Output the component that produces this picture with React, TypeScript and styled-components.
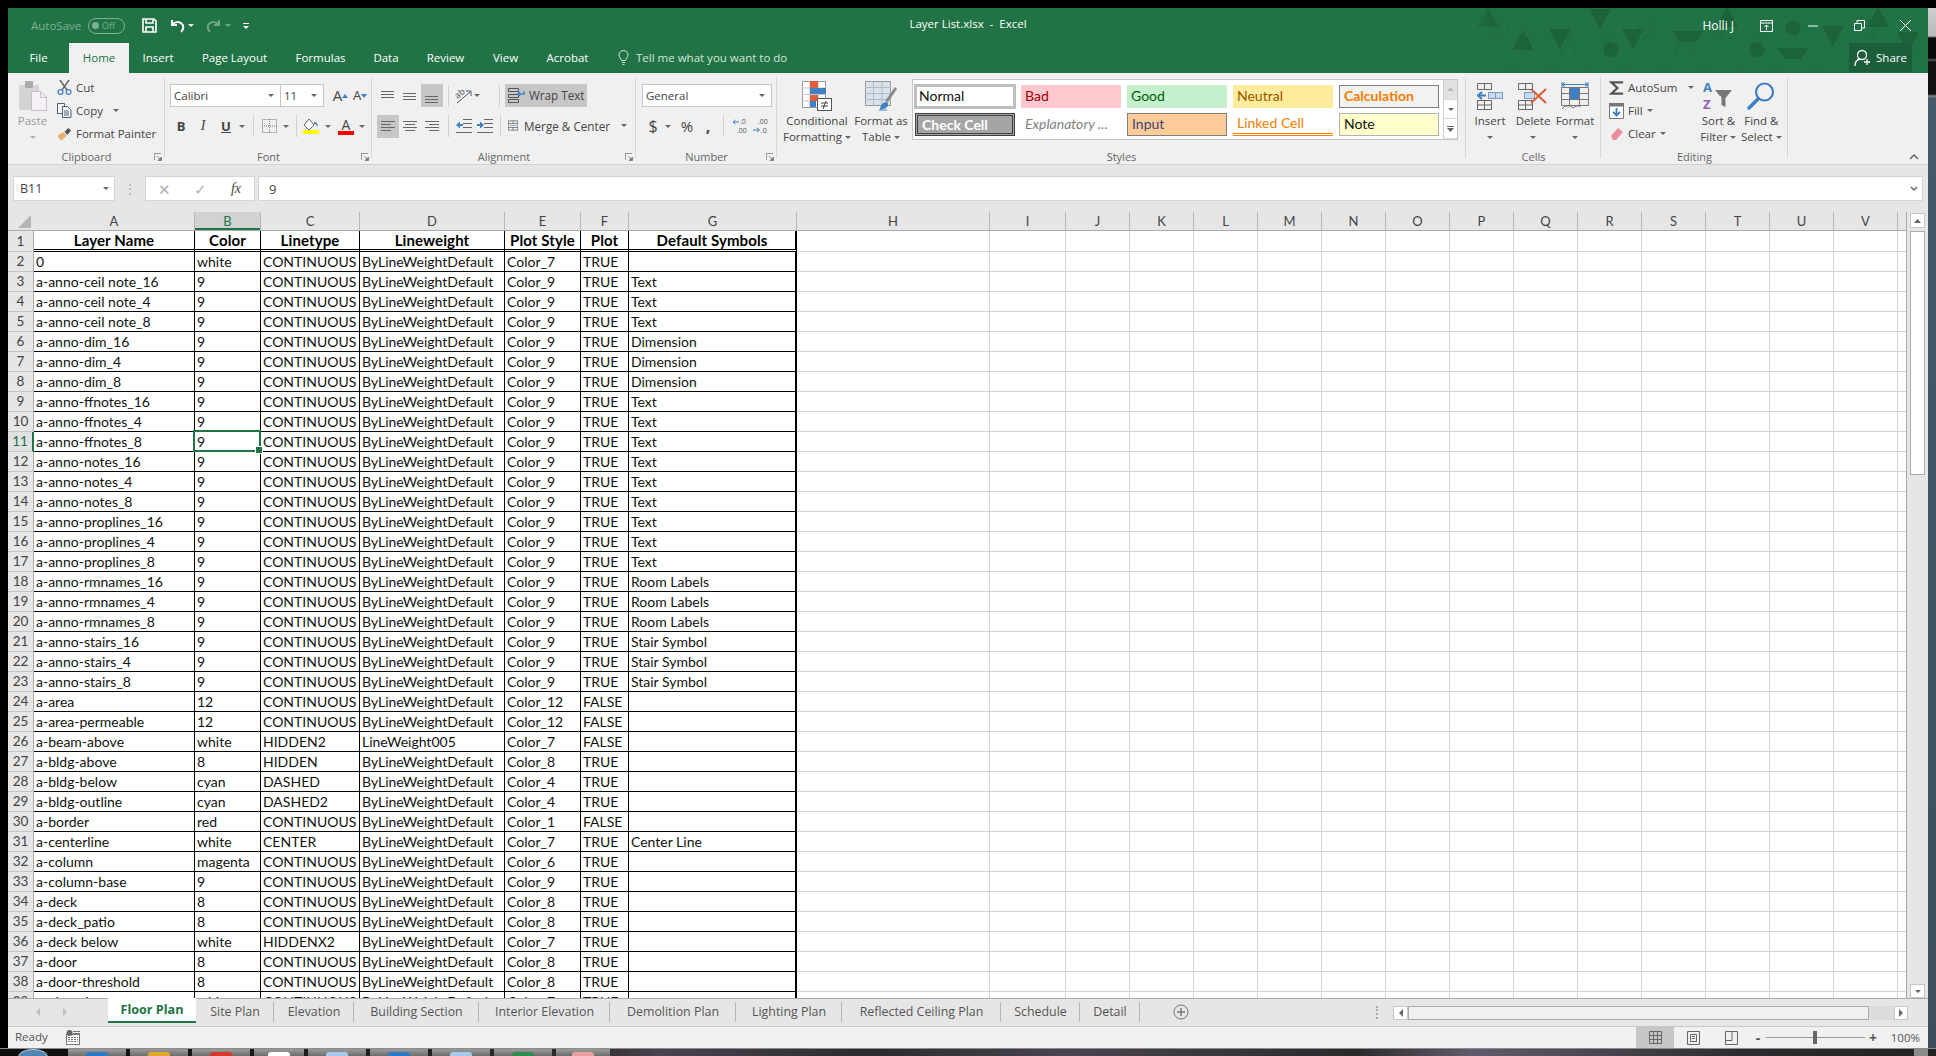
import React from "react";
import styled, { createGlobalStyle, css } from "styled-components";

const ui = `"Open Sans", "Noto Sans", "Liberation Sans", sans-serif`;
const cellFont = `Lato, "Noto Sans", "Liberation Sans", sans-serif`;
const green = "#217346";

const Global = createGlobalStyle`
  html, body { margin: 0; padding: 0; background: #000; overflow: hidden; }
  #root { width: 1936px; height: 1056px; }
  * { box-sizing: border-box; }
`;

const Page = styled.div`
  width: 1936px; height: 1056px; background: #000; padding-top: 8px;
  display: flex; flex-direction: column; font-family: ${ui};
`;
const Middle = styled.div`display: flex; padding-left: 8px; height: 1040px;`;
const Win = styled.div`width: 1920px; height: 1040px; display: flex; flex-direction: column; background: #e6e6e6;`;
const Strip = styled.div`
  width: 8px;
  background: linear-gradient(#cfcfcf 0, #b9b9b9 28px, #0a0a0a 30px, #0a0a0a 50px, #555 52px, #111 54px, #111 86px, #8a8a8a 88px, #45596a 90px, #3c4f5b 100%);
`;

/* title */
const Head = styled.div`background: ${green}; height: 65px; position: relative; color: #fff; flex: none;`;
const Pattern = styled.svg`
  position: absolute; right: 0; top: 0; pointer-events: none;
  mask-image: linear-gradient(90deg, transparent, #000 70px);
`;
const TitleRow = styled.div`height: 35px; display: grid; grid-template-columns: 1fr auto 1fr; align-items: center; position: relative;`;
const Qat = styled.div`display: flex; align-items: center; padding-left: 23px;`;
const AutoSave = styled.span`font-size: 11.5px; color: #7fb195; width: 57px;`;
const Toggle = styled.span`
  width: 37px; height: 16px; border: 1px solid #7fb195; border-radius: 8px; color: #7fb195;
  font-size: 9px; display: flex; align-items: center; gap: 3px; padding-left: 3px; margin-right: 17px;
  &::before { content: ""; width: 7px; height: 7px; border-radius: 50%; background: #7fb195; }
`;
const QatSlot = styled.span<{ $w: number; $ml?: number }>`
  width: ${p => p.$w}px; margin-left: ${p => p.$ml ?? 0}px; display: flex; flex-direction: column; gap: 2px; align-items: center; justify-content: center; flex: none;
`;
const QatBar = styled.i`display: block; width: 6px; height: 1px; background: #fff;`;
const DocTitle = styled.div`font-size: 11.5px; white-space: pre; margin-top: -4px;`;
const Controls = styled.div`display: flex; align-items: center; justify-content: flex-end; padding-right: 17px;`;
const UserName = styled.span`font-size: 12px; margin-right: 26px;`;
const Ctrl = styled.span<{ $w: number; $ml?: number }>`width: ${p => p.$w}px; margin-left: ${p => p.$ml ?? 0}px; display: flex; justify-content: center; flex: none;`;

const TabRow = styled.div`height: 30px; display: flex; align-items: stretch; position: relative;`;
const Tab = styled.div<{ $w: number; $active?: boolean }>`
  width: ${p => p.$w}px; flex: none; display: flex; align-items: center; justify-content: center; padding-bottom: 2px;
  font-size: 11.5px; color: #fff;
  ${p => p.$active && css`background: #f0f0f0; color: ${green};`}
`;
const TellMe = styled.div`display: flex; align-items: center; gap: 7px; padding: 0 0 2px 16px; font-size: 11.5px; color: #d3e5da;`;
const Share = styled.div`
  margin-left: auto; margin-right: 16px; width: 63px; height: 29px; background: #1b5e39; display: flex;
  align-items: center; justify-content: center; gap: 5px; font-size: 11.5px; color: #fff;
`;

/* ribbon */
const Ribbon = styled.div`height: 92px; background: #f0f0f0; display: flex; border-bottom: 1px solid #d2d2d2; flex: none; position: relative;`;
const Group = styled.div<{ $w: number }>`
  width: ${p => p.$w}px; flex: none; display: flex; flex-direction: column; position: relative;
  &::after { content: ""; position: absolute; right: 0; top: 4px; bottom: 6px; width: 1px; background: #d6d6d6; }
`;
const Body = styled.div<{ $pl?: number }>`height: 76px; flex: none; display: flex; padding-left: ${p => p.$pl ?? 0}px;`;
const Label = styled.div`height: 15px; text-align: center; font-size: 11px; line-height: 15px; color: #666; position: relative;`;
const Launcher = styled.svg`position: absolute; right: 3px; top: 4px;`;
const Big = styled.div<{ $w: number; $muted?: boolean }>`
  width: ${p => p.$w}px; flex: none; display: flex; flex-direction: column; align-items: center; padding-top: 8px;
  font-size: 11.5px; line-height: 16px; color: ${p => (p.$muted ? "#9b9b9b" : "#444")}; white-space: nowrap;
`;
const BigIcon = styled.div`height: 30px; margin-bottom: 2px; display: flex; align-items: center; justify-content: center;`;
const Line = styled.div`height: 16px; display: flex; align-items: center; gap: 3px; justify-content: center;`;
const Caret = styled.i<{ $c?: string }>`
  display: block; width: 0; height: 0; flex: none;
  border-left: 3px solid transparent; border-right: 3px solid transparent; border-top: 3px solid ${p => p.$c ?? "#666"};
`;
const SmallList = styled.div`display: flex; flex-direction: column; padding-top: 3px;`;
const SmallItem = styled.div<{ $muted?: boolean }>`height: 23px; display: flex; align-items: center; gap: 4px; font-size: 11.5px; color: #444; white-space: nowrap;`;
const SmallIcon = styled.span`width: 15px; display: flex; justify-content: center; flex: none;`;
const Rows = styled.div`display: flex; flex-direction: column; padding-top: 11px; gap: 8px;`;
const RowLine = styled.div<{ $h?: number }>`height: ${p => p.$h ?? 23}px; display: flex; align-items: center;`;
const Combo = styled.div<{ $w: number }>`
  width: ${p => p.$w}px; height: 23px; background: #fff; border: 1px solid #c6c6c6; flex: none;
  display: flex; align-items: center; justify-content: space-between; padding: 0 6px 0 3px;
  font-size: 11.5px; color: #444; & + & { border-left: 0; }
`;
const Slot = styled.span<{ $w: number; $ml?: number; $on?: boolean }>`
  width: ${p => p.$w}px; height: 22px; margin-left: ${p => p.$ml ?? 0}px; flex: none; display: flex; align-items: center; justify-content: center;
  color: #444; ${p => p.$on && "background: #c6c6c6; height: 23px;"}
`;
const Sep = styled.span<{ $w: number; $ml?: number }>`
  width: ${p => p.$w}px; height: 22px; margin-left: ${p => p.$ml ?? 0}px; flex: none;
  background: linear-gradient(#d0d0d0, #d0d0d0) center / 1px 100% no-repeat;
`;
const Glyph = styled.span<{ $size?: number; $b?: boolean; $i?: boolean; $u?: boolean; $serif?: boolean }>`
  font-size: ${p => p.$size ?? 13}px; line-height: 1; color: #444; font-weight: ${p => (p.$b ? 700 : 400)};
  font-style: ${p => (p.$i ? "italic" : "normal")}; text-decoration: ${p => (p.$u ? "underline" : "none")};
  font-family: ${p => (p.$serif ? `"Liberation Serif", serif` : ui)};
`;
const TextBtn = styled.div<{ $w: number; $on?: boolean; $gap?: number }>`
  width: ${p => p.$w}px; height: 23px; flex: none; display: flex; align-items: center; gap: ${p => p.$gap ?? 4}px; padding: 0 0 1px 3px;
  font-size: 11.7px; color: #444; white-space: nowrap; ${p => p.$on && "background: #c6c6c6;"}
`;
const ColorGlyph = styled.span<{ $bar: string }>`
  display: flex; flex-direction: column; align-items: center; width: 16px;
  &::after { content: ""; width: 16px; height: 4px; background: ${p => p.$bar}; margin-top: -1px; }
`;

const Gallery = styled.div`
  width: 546px; height: 61px; margin: 6px 0 0 3px; border: 1px solid #c6c6c6; background: #fff; display: flex; flex: none;
`;
const StyleGrid = styled.div`
  flex: 1; display: grid; grid-template-columns: repeat(5, 100px); grid-auto-rows: 23px; column-gap: 6px; row-gap: 5px; padding: 5px 0 0 2px;
`;
const StyleCell = styled.div<{ $kind: string }>`
  font-family: ${cellFont}; font-size: 14px; display: flex; align-items: center; padding: 0 0 3px 4px; white-space: nowrap; overflow: hidden;
  ${p => ({
    normal: "color:#111;box-shadow:0 0 0 1px #bfbfbf, inset 0 0 0 2px #bfbfbf;",
    bad: "background:#ffc7ce;color:#9c0006;",
    good: "background:#c6efce;color:#006100;",
    neutral: "background:#ffeb9c;color:#9c5700;",
    calc: "background:#f2f2f2;color:#fa7d00;font-weight:700;border:1px solid #7f7f7f;",
    check: "background:#a5a5a5;color:#fff;font-weight:700;border:3px double #3f3f3f;padding-bottom:1px;",
    expl: "color:#7f7f7f;font-style:italic;",
    input: "background:#ffcc99;color:#3f3f76;border:1px solid #7f7f7f;",
    linked: "color:#fa7d00;border-bottom:3px double #ff8001;padding-bottom:1px;",
    note: "background:#ffffcc;color:#111;border:1px solid #b2b2b2;",
  } as Record<string, string>)[p.$kind]}
`;
const GalleryScroll = styled.div`width: 14px; flex: none; display: flex; flex-direction: column; border-left: 1px solid #d0d0d0;`;
const GalleryBtn = styled.div<{ $top?: boolean }>`
  flex: 1; display: flex; align-items: center; justify-content: center; border-bottom: 1px solid #d8d8d8;
  background: ${p => (p.$top ? "#e2e2e2" : "#fff")};
`;
const Collapse = styled.svg`position: absolute; right: 9px; bottom: 4px;`;

/* formula */
const Formula = styled.div`height: 25px; margin-top: 11px; display: flex; padding: 0 5px; flex: none; font-size: 12px; color: #444;`;
const Box = styled.div<{ $w?: number }>`
  ${p => (p.$w ? `width:${p.$w}px;flex:none;` : "flex:1;")}
  background: #fff; border: 1px solid #d4d4d4; display: flex; align-items: center;
`;
const NameInner = styled.span`flex: 1; padding-left: 6px; font-size: 12.5px;`;
const Grip = styled.span`width: 30px; flex: none; display: flex; justify-content: center; align-items: center; color: #aaa; font-size: 12px;`;
const FnSlot = styled.span<{ $w: number }>`width: ${p => p.$w}px; display: flex; justify-content: center; flex: none; color: #b0b0b0; font-size: 15px;`;
const FormulaText = styled.span`flex: 1; padding-left: 10px; font-size: 13px;`;
const FormulaGap = styled.span`width: 3px; flex: none;`;

/* sheet */
const Sheet = styled.div`height: 786px; margin-top: 11px; display: flex; flex: none;`;
const GridArea = styled.div`width: 1899px; flex: none; overflow: hidden; background: #fff; border-right: 1px solid #a8a8a8;`;
const HeaderRow = styled.div`display: flex; height: 19px; background: #e6e6e6; border-bottom: 1px solid #ababab;`;
const Corner = styled.div`width: 26px; flex: none; display: flex; align-items: flex-end; justify-content: flex-end; padding: 0 3px 2px 0;`;
const ColH = styled.div<{ $w: number; $sel?: boolean }>`
  width: ${p => p.$w}px; flex: none; text-align: center; font-family: ${cellFont}; font-size: 13px; line-height: 18px; color: #444;
  border-right: 1px solid #b8b8b8;
  ${p => p.$sel && css`background: #d2d2d2; color: ${green}; box-shadow: inset 0 -2px 0 ${green};`}
`;
const Row = styled.div<{ $h: number }>`display: flex; height: ${p => p.$h}px;`;
const RowH = styled.div<{ $sel?: boolean }>`
  width: 26px; flex: none; background: #e6e6e6; border-bottom: 1px solid #c4c4c4; border-right: 1px solid #ababab;
  display: flex; align-items: center; justify-content: center; padding-bottom: 1px; font-family: ${cellFont}; font-size: 13.5px; color: #444;
  ${p => p.$sel && css`background: #e1e1e1; color: ${green}; border-right: 2px solid ${green};`}
`;
const Cell = styled.div<{ $w: number; $table?: boolean; $head?: boolean; $edge?: boolean; $sel?: boolean }>`
  width: ${p => p.$w}px; flex: none; position: relative; padding: 0 0 1px 2px; font-family: ${cellFont}; font-size: 14px; color: #111;
  white-space: nowrap; display: flex; align-items: center; overflow: visible;
  border-right: ${p => (p.$edge ? "2px solid #000" : p.$table ? "1px solid #000" : "1px solid #d4d4d4")};
  border-bottom: ${p => (p.$head ? "3px double #000" : p.$table ? "1px solid #000" : "1px solid #d4d4d4")};
  ${p => p.$head && "font-weight: 700; font-size: 15px; letter-spacing: .1px; justify-content: center; padding: 0; color: #000;"}
  ${p => p.$sel && css`
    &::after { content: ""; position: absolute; left: -2px; top: -2px; right: -1px; bottom: -1px; border: 2px solid ${green}; z-index: 2; }
    &::before { content: ""; position: absolute; right: -3px; bottom: -3px; width: 6px; height: 6px; background: ${green}; border: 1px solid #fff; z-index: 3; }
  `}
`;
const VScroll = styled.div`flex: 1; padding: 1px 0 0 3px; display: flex; flex-direction: column; background: #e6e6e6;`;
const ScrollBtn = styled.div<{ $w?: number; $h?: number }>`
  width: ${p => p.$w ?? 15}px; height: ${p => p.$h ?? 15}px; flex: none; background: #fff; border: 1px solid #c6c6c6; display: flex; align-items: center; justify-content: center;
`;
const VThumb = styled.div`width: 15px; height: 244px; margin-top: 3px; background: #fff; border: 1px solid #ababab; flex: none;`;
const Flex1 = styled.div`flex: 1;`;

/* tabs */
const SheetTabs = styled.div`height: 29px; flex: none; display: flex; align-items: stretch; background: #e6e6e6; border-top: 1px solid #ababab; border-bottom: 1px solid #c8c8c8;`;
const Nav = styled.div`width: 100px; flex: none; display: flex; align-items: center; gap: 23px; padding: 0 0 2px 28px;`;
const NavArrow = styled.i<{ $left?: boolean }>`
  display: block; width: 0; height: 0; border-top: 4px solid transparent; border-bottom: 4px solid transparent;
  ${p => (p.$left ? "border-right: 4px solid #bdbdbd;" : "border-left: 4px solid #bdbdbd;")}
`;
const ScrollArrow = styled.i<{ $left?: boolean }>`
  display: block; width: 0; height: 0; border-top: 4px solid transparent; border-bottom: 4px solid transparent;
  ${p => (p.$left ? "border-right: 4px solid #666;" : "border-left: 4px solid #666;")}
`;
const STab = styled.div<{ $w: number; $active?: boolean }>`
  width: ${p => p.$w}px; flex: none; font-size: 12.4px; color: #555; display: flex; align-items: center; justify-content: center; position: relative; white-space: nowrap; padding-bottom: 3px;
  ${p => p.$active
    ? css`background: #fff; color: ${green}; font-weight: 700; height: 25px; margin-top: -1px; border-bottom: 2px solid ${green}; font-size: 12.6px; padding-bottom: 1px;`
    : css`&::after { content: ""; position: absolute; right: 0; top: 3px; height: 20px; width: 1px; background: #b5b5b5; }`}
`;
const AddSheet = styled.div`margin-left: 33px; padding-bottom: 2px; display: flex; align-items: center;`;
const HScroll = styled.div`margin-left: auto; margin-right: 20px; display: flex; align-items: center;`;
const GripV = styled.span`width: 3px; height: 13px; margin-right: 14px; border-left: 2px dotted #aaa;`;
const HTrack = styled.div`width: 486px; height: 14px; flex: none; background: #dcdcdc; display: flex;`;
const HThumb = styled.div`width: 461px; height: 14px; background: #f0f0f0; border: 1px solid #ababab;`;

/* status */
const Status = styled.div`height: 21px; flex: none; background: #f0f0f0; display: flex; align-items: stretch; font-size: 11.5px; color: #555;`;
const Ready = styled.span`padding: 0 0 2px 7px; width: 58px; display: flex; align-items: center;`;
const MacroSlot = styled.span`display: flex; align-items: center;`;
const ViewBtn = styled.span<{ $on?: boolean }>`width: 38px; flex: none; display: flex; align-items: center; justify-content: center; ${p => p.$on && "background: #c6c6c6;"}`;
const StatusRight = styled.div`margin-left: auto; display: flex; align-items: stretch;`;
const Zoom = styled.div`display: flex; align-items: center; width: 178px; flex: none; padding-right: 8px; font-weight: 700; color: #555;`;
const ZoomMark = styled.span<{ $w: number }>`width: ${p => p.$w}px; flex: none; font-size: 14px; text-align: center;`;
const Slider = styled.div`width: 99px; height: 1px; background: #9a9a9a; position: relative; flex: none;
  &::after { content: ""; position: absolute; left: 47px; top: -6px; width: 4px; height: 13px; background: #666; }
`;
const ZoomPct = styled.span`font-size: 11.5px; font-weight: 400; margin-left: auto;`;

/* taskbar */
const Taskbar = styled.div`
  height: 8px; flex: none; display: flex; overflow: hidden; border-top: 1px solid #8c8c8c; padding-left: 18px; position: relative;
  background: linear-gradient(90deg, #0c0c0c 0, #2c2a2d 30%, #4b4350 34%, #2a2a30 45%, #4a4450 55%, #2a2a2c 70%, #655a6c 76%, #2c2c30 90%, #222 100%);
`;
const Orb = styled.div`width: 30px; height: 16px; border-radius: 50%; background: #4f86b4; border: 1px solid #bcd; margin-right: 20px; flex: none;`;
const TaskBtn = styled.div<{ $w: number; $c: string }>`
  width: ${p => p.$w}px; margin-right: 4px; flex: none; display: flex; justify-content: center; align-items: flex-end; background: linear-gradient(#9b9b9b, #6d6d6d);
  &::after { content: ""; width: 22px; height: 4px; background: ${p => p.$c}; border-radius: 3px 3px 0 0; }
`;
const DesktopBtn = styled.div`position: absolute; right: 8px; bottom: 0; width: 14px; height: 7px; background: #8a8a8a;`;

/* data */
const BL = "ByLineWeightDefault", CN = "CONTINUOUS";
const fam = (n: string, sym: string) => [16, 4, 8].map(k => `${n}_${k}|9|${CN}|${BL}|Color_9|TRUE|${sym}`);
const rows: string[] = [
  `0|white|${CN}|${BL}|Color_7|TRUE|`,
  ...fam("a-anno-ceil note", "Text"), ...fam("a-anno-dim", "Dimension"), ...fam("a-anno-ffnotes", "Text"),
  ...fam("a-anno-notes", "Text"), ...fam("a-anno-proplines", "Text"), ...fam("a-anno-rmnames", "Room Labels"),
  ...fam("a-anno-stairs", "Stair Symbol"),
  `a-area|12|${CN}|${BL}|Color_12|FALSE|`,
  `a-area-permeable|12|${CN}|${BL}|Color_12|FALSE|`,
  `a-beam-above|white|HIDDEN2|LineWeight005|Color_7|FALSE|`,
  `a-bldg-above|8|HIDDEN|${BL}|Color_8|TRUE|`,
  `a-bldg-below|cyan|DASHED|${BL}|Color_4|TRUE|`,
  `a-bldg-outline|cyan|DASHED2|${BL}|Color_4|TRUE|`,
  `a-border|red|${CN}|${BL}|Color_1|FALSE|`,
  `a-centerline|white|CENTER|${BL}|Color_7|TRUE|Center Line`,
  `a-column|magenta|${CN}|${BL}|Color_6|TRUE|`,
  `a-column-base|9|${CN}|${BL}|Color_9|TRUE|`,
  `a-deck|8|${CN}|${BL}|Color_8|TRUE|`,
  `a-deck_patio|8|${CN}|${BL}|Color_8|TRUE|`,
  `a-deck below|white|HIDDENX2|${BL}|Color_7|TRUE|`,
  `a-door|8|${CN}|${BL}|Color_8|TRUE|`,
  `a-door-threshold|8|${CN}|${BL}|Color_8|TRUE|`,
  `a-elevation|white|${CN}|${BL}|Color_7|TRUE|`,
];
const headers = ["Layer Name", "Color", "Linetype", "Lineweight", "Plot Style", "Plot", "Default Symbols"];
const cols: [string, number][] = [["A", 161], ["B", 66], ["C", 99], ["D", 145], ["E", 76], ["F", 48], ["G", 168], ["H", 193], ["I", 76],
  ...("JKLMNOPQRSTUV".split("").map(c => [c, 64] as [string, number])), ["", 9]];

const blank = cols.slice(7);

/* icons */
const LaunchIcon = () => (
  <Launcher width="8" height="8" viewBox="0 0 8 8"><path d="M.5 7V.5H7" fill="none" stroke="#999" /><path d="M3 3l3.5 3.5M7.5 4v3.5H4z" fill="#777" stroke="#777" strokeWidth=".8" /></Launcher>
);
const Save = () => (
  <svg width="15" height="15" viewBox="0 0 15 15" fill="none" stroke="#fff" strokeWidth="1.6"><path d="M1 1h11l2 2v11H1z" /><path d="M4 1v4h7V1M4 14V9h7v5" /></svg>
);
const Undo = ({ c = "#fff", flip = false }: { c?: string; flip?: boolean }) => (
  <svg width="15" height="14" viewBox="0 0 15 14" fill="none" stroke={c} strokeWidth="2" transform={flip ? "scale(-1 1)" : undefined}><path d="M2 1v5h5" /><path d="M2.5 5.5C5 2.5 9 2.5 11.5 4.5s2.5 5.5-.5 8.5" /></svg>
);
const Bulb = () => (
  <svg width="11" height="15" viewBox="0 0 11 15" fill="none" stroke="#d3e5da"><path d="M3.5 10.5C3 8.5 1 7.5 1 5a4.5 4.5 0 0 1 9 0c0 2.5-2 3.5-2.5 5.5zM4 12.5h3M4.5 14.5h2" /></svg>
);
const Person = () => (
  <svg width="17" height="18" viewBox="0 0 17 18" fill="none" stroke="#fff" strokeWidth="1.3"><circle cx="8" cy="6" r="4.5" /><path d="M1 17c0-4 2.5-6.5 5-7M10 13h6M13 10v6" /></svg>
);
const PasteIcon = () => (
  <svg width="28" height="30" viewBox="0 0 28 30"><rect x="0" y="4" width="20" height="25" rx="1" fill="#d6d3d6" /><rect x="6" y="0" width="8" height="7" rx="1" fill="#aaa" /><path d="M12.500 10.500h9l6 6v13h-15z" fill="#f6eff6" stroke="#c4bfc4" /><path d="M21.500 10.500v6h6" fill="none" stroke="#c4bfc4" /></svg>
);
const Scissors = () => (
  <svg width="15" height="15" viewBox="0 0 15 15" fill="none"><path d="M3 0l7 10M12 0L5 10" stroke="#666" strokeWidth="1.5" /><circle cx="3.500" cy="12" r="2.400" stroke="#3f7fc4" strokeWidth="1.300" /><circle cx="11.500" cy="12" r="2.400" stroke="#3f7fc4" strokeWidth="1.300" /></svg>
);
const CopyIcon = () => (
  <svg width="15" height="15" viewBox="0 0 15 15" fill="#f6f6f6" stroke="#48617f"><path d="M.5.5h7v10h-7z" /><path d="M5.500 3.500h5l3.500 3.500v7.500H5.500z" /><path d="M7 8h5M7 10h5M7 12h5" fill="none" /></svg>
);
const Painter = () => (
  <svg width="16" height="15" viewBox="0 0 16 15"><path d="M1 9l6-3 3 4-5 5C3 14 1 12 1 9z" fill="#e3b06f" /><path d="M8 5.500l4-4 3 2.500-4 5z" fill="#555" /></svg>
);
const BorderIcon = () => (
  <svg width="15" height="14" viewBox="0 0 15 14" fill="none" stroke="#777" strokeDasharray="1 1"><path d="M.5.5h14v13H.5zM7.500 0v14M0 7h15" /></svg>
);
const Bucket = () => (
  <svg width="16" height="13" viewBox="0 0 16 13"><path d="M6 1L1 7l5 5 5-5z" fill="#fff" stroke="#666" /><path d="M11 4c2 0 4 1 4 5-1-2-2-3-4-3z" fill="#3f7fc4" /></svg>
);
const Align = ({ lines }: { lines: [number, number, number][] }) => (
  <svg width="15" height="14" viewBox="0 0 15 14" stroke="#666">{lines.map((l, i) => <path key={i} d={`M${l[0]} ${l[2] + .5}H${l[1]}`} />)}</svg>
);
const Orient = () => (
  <svg width="18" height="17" viewBox="0 0 18 17" overflow="visible"><text x="1" y="10" fontSize="9" fill="#555" transform="rotate(-40 5 9)" fontFamily="Open Sans">ab</text><path d="M2 16L15 5M11 4h5v5" fill="none" stroke="#555" /></svg>
);
const WrapIcon = () => (
  <svg width="17" height="15" viewBox="0 0 17 15" fill="none" stroke="#555"><path d="M.5.500h10v3H.5zM.5 6.500h10v3H.5zM.5 11.500h10v3H.5z" /><path d="M16 3v3H10" stroke="#3f7fc4" strokeWidth="1.300" /><path d="M12 4L9.500 6 12 8" stroke="#3f7fc4" strokeWidth="1.300" /></svg>
);
const MergeIcon = () => (
  <svg width="15" height="15" viewBox="0 0 15 15" fill="none" stroke="#555"><path d="M.5.500h14v14H.5zM.5 4.500h14M.5 10.500h14M7.500.500v4M7.500 10.500v4" /><path d="M3 7.500h9" stroke="#3f7fc4" /></svg>
);
const Indent = ({ right = false }: { right?: boolean }) => (
  <svg width="16" height="14" viewBox="0 0 16 14" stroke="#666"><path d="M7 .5h9M7 4.500h9M7 8.500h9M0 13.500h16" fill="none" /><path d={right ? "M0 6h4" : "M2 6h5"} stroke="#3f7fc4" strokeWidth="2" /><path d={right ? "M3 2.500L7 6 3 9.500z" : "M4 2.500L0 6l4 3.500z"} fill="#3f7fc4" stroke="none" /></svg>
);
const DecIcon = ({ flip = false }: { flip?: boolean }) => (
  <svg width="16" height="18" viewBox="0 0 16 18" fontSize="7" fill="#555" fontFamily="Open Sans" overflow="visible">
    {flip ? <><text x="5" y="7">.00</text><text x="8" y="16">.0</text><path d="M0 13h6M4 11l2.500 2L4 15" fill="none" stroke="#3f7fc4" /></>
      : <><text x="8" y="7">.0</text><text x="5" y="16">.00</text><path d="M1 5h6M3.500 3L1 5l2.500 2" fill="none" stroke="#3f7fc4" /></>}
  </svg>
);
const CfIcon = () => (
  <svg width="30" height="30" viewBox="0 0 30 30"><path d="M.5.500h23v26H.5z" fill="#fff" stroke="#999" /><path d="M8 .5v26M16 .5v26M0 7h24M0 13.500h24M0 20h24" stroke="#c4c4c4" /><rect x="8" y="0" width="8" height="7" fill="#e0603e" /><rect x="8" y="7" width="16" height="6" fill="#3f7fc4" /><rect x="8" y="14" width="8" height="6" fill="#e0603e" /><rect x="8" y="20" width="6" height="6" fill="#3f7fc4" /><rect x="15.500" y="17.500" width="14" height="12" fill="#fff" stroke="#555" /><path d="M19 22h7M19 25h7M24 20l-3 8" stroke="#444" fill="none" /></svg>
);
const TableIcon = () => (
  <svg width="32" height="30" viewBox="0 0 32 30"><path d="M.5.5h25v24H.5z" fill="#d6e2f0" stroke="#999" /><path d="M8.500 .5v24M17 .5v24M0 6.500h26M0 12.500h26M0 18.500h26" stroke="#b8b8b8" /><path d="M20 20L30 6l2 2-9 13z" fill="#888" /><path d="M15 29c0-5 3-8 7-8 2 1 1 5-1 6z" fill="#3f7fc4" /><path d="M14 29h8" stroke="#3f7fc4" /></svg>
);
const InsertIcon = () => (
  <svg width="26" height="27" viewBox="0 0 26 27" fill="none" stroke="#666"><path d="M.5.500h14v6H.5zM7.500.5v6M.5 17.500h14v9H.5zM7.500 17.500v9M.5 22h14" /><rect x="11.500" y="9.500" width="14" height="6" fill="#c9dbee" stroke="#7b9cc2" /><path d="M18.500 9.500v6" stroke="#7b9cc2" /><path d="M1 12.500h8" stroke="#3f7fc4" strokeWidth="2" /><path d="M5 9L1 12.500 5 16" stroke="#3f7fc4" strokeWidth="2" /></svg>
);
const DeleteIcon = () => (
  <svg width="30" height="27" viewBox="0 0 30 27" fill="none" stroke="#666"><path d="M.5.500h14v6H.5zM7.500.5v6M.5 17.500h14v9H.5zM7.500 17.500v9M.5 22h14" /><rect x="6.500" y="9.500" width="10" height="6" fill="#c9dbee" stroke="#7b9cc2" /><path d="M13 6l15 14M28 6L13 20" stroke="#e0603e" strokeWidth="2.200" /></svg>
);
const FormatIcon = () => (
  <svg width="28" height="28" viewBox="0 0 28 28" fill="none" stroke="#777"><path d="M.5 5.500h27v18H.5zM.5 11.500h27M.5 17.500h27M8.500 5.500v18M18.500 5.500v18" /><rect x="9" y="6" width="9" height="11" fill="#3f7fc4" stroke="none" /><path d="M1 2.500h26M1 0v5M27 0v5M1 2.500L4 .5M1 2.500l3 2M27 2.500L24 .5M27 2.500l-3 2" stroke="#3f7fc4" /><path d="M1 27l3-3h6l2 2 3-2h5" /></svg>
);
const Sigma = () => (
  <svg width="16" height="16" viewBox="0 0 16 16" fill="none" stroke="#555" strokeWidth="2.400"><path d="M15 2H2.500L9 8 2.500 14H15" /></svg>
);
const FillIcon = () => (
  <svg width="15" height="16" viewBox="0 0 15 16" fill="#fff" stroke="#777"><path d="M.5.500h14v15H.5z" /><rect x="0" y="0" width="15" height="3" fill="#777" /><path d="M7.500 5v7M4 9l3.500 3.500L11 9" fill="none" stroke="#3f7fc4" strokeWidth="1.800" /></svg>
);
const Eraser = () => (
  <svg width="14" height="14" viewBox="0 0 14 14"><path d="M1 9l7-8 5 4-7 8H3z" fill="#ec8b9b" /></svg>
);
const SortIcon = () => (
  <svg width="30" height="28" viewBox="0 0 30 28" overflow="visible"><text x="0" y="10" fontFamily="Open Sans" fontWeight="700" fontSize="13" fill="#3f7fc4">A</text><text x="0" y="27" fontFamily="Open Sans" fontWeight="700" fontSize="13" fill="#8f5fb8">Z</text><path d="M12 8h17l-6.500 8v9l-4-2v-7z" fill="#777" /><path d="M17.500 14v7" stroke="#f0f0f0" /></svg>
);
const FindIcon = () => (
  <svg width="28" height="28" viewBox="0 0 28 28" fill="none" stroke="#3f7fc4"><circle cx="17.500" cy="10" r="8.500" strokeWidth="2.200" /><path d="M11 17L2 26" strokeWidth="3.500" strokeLinecap="round" /></svg>
);
const MacroIcon = () => (
  <svg width="14" height="15" viewBox="0 0 14 15" fill="none" stroke="#777"><rect x=".5" y="4.500" width="13" height="10" fill="#fff" /><circle cx="3.500" cy="3" r="3" fill="#666" stroke="none" /><path d="M7 1.500h7M7 3.500h7" /><path d="M2 7.500h10M2 9.500h10M2 11.500h10" strokeDasharray="2 1" /></svg>
);

/* the hexagon artwork behind the window controls */
const latticeX = Array.from({ length: 15 }, (_, i) => -40 + i * 38);
const darkTriangles: [number, number, boolean][] = [[50, 10, true], [85, 33, true], [122, 30, false], [162, 10, false], [195, 30, false], [289, 10, true], [395, 27, false], [440, 10, true], [470, 33, false]];
const darkBands: [number, number][] = [[250, 28], [355, 45], [430, 46]];
const darkCircles: [number, number][] = [[173, 42], [319, 42], [355, 20]];
const openCircles: [number, number][] = [[62, 20], [209, 20], [245, 44], [392, 44], [430, 20], [470, 46], [130, 46], [290, 22]];
const TitlePattern = () => (
  <Pattern width="490" height="65" viewBox="0 0 490 65">
    <g fill="none" stroke="#1f6b42" strokeOpacity=".8">
      <path d="M0 30H490M0 63H490" />
      {latticeX.map(x => <path key={x} d={`M${x} -3L${x + 38} 63M${x + 38} -3L${x} 63`} />)}
      {openCircles.map(([x, y]) => <circle key={`${x}-${y}`} cx={x} cy={y} r="8" />)}
    </g>
    <g fill="#1d6339">
      {darkTriangles.map(([x, y, up]) => (
        <path key={`${x}-${y}`} d={up ? `M${x} ${y - 11}l11 20h-22z` : `M${x - 11} ${y - 9}h22l-11 20z`} />
      ))}
      {darkBands.map(([x, y]) => <path key={`${x}-${y}`} d={`M${x - 16} ${y - 5}h32l-8 11h-16z`} />)}
      {darkCircles.map(([x, y]) => <circle key={`${x}-${y}`} cx={x} cy={y} r="7.500" />)}
    </g>
  </Pattern>
);

const tabs: [string, number][] = [["File", 61], ["Home", 60], ["Insert", 58], ["Page Layout", 95], ["Formulas", 77], ["Data", 54], ["Review", 65], ["View", 55], ["Acrobat", 69]];
const sheets: [string, number][] = [["Floor Plan", 88], ["Site Plan", 78], ["Elevation", 80], ["Building Section", 125], ["Interior Elevation", 131], ["Demolition Plan", 126], ["Lighting Plan", 106], ["Reflected Ceiling Plan", 159], ["Schedule", 79], ["Detail", 60]];
const galleryCells: [string, string][] = [["normal", "Normal"], ["bad", "Bad"], ["good", "Good"], ["neutral", "Neutral"], ["calc", "Calculation"], ["check", "Check Cell"], ["expl", "Explanatory ..."], ["input", "Input"], ["linked", "Linked Cell"], ["note", "Note"]];
const tasks: [number, string][] = [[58, "#2f78c8"], [58, "#e0a92c"], [58, "#d33a2c"], [50, "#fff"], [58, "#a9c8ea"], [58, "#2f78c8"], [58, "#a9c8ea"], [58, "#2e8b4f"], [54, "#e8a0a0"]];

export default function App() {
  return (
    <Page>
      <Global />
      <Middle>
        <Win>
          <Head>
            <TitlePattern />
            <TitleRow>
              <Qat>
                <AutoSave>AutoSave</AutoSave>
                <Toggle>Off</Toggle>
                <QatSlot $w={15}><Save /></QatSlot>
                <QatSlot $w={15} $ml={13}><Undo /></QatSlot>
                <QatSlot $w={6} $ml={3}><Caret $c="#dfeee6" /></QatSlot>
                <QatSlot $w={15} $ml={12}><Undo c="#6fa687" flip /></QatSlot>
                <QatSlot $w={6} $ml={4}><Caret $c="#6fa687" /></QatSlot>
                <QatSlot $w={6} $ml={12}><QatBar /><Caret $c="#fff" /></QatSlot>
              </Qat>
              <DocTitle>Layer List.xlsx  -  Excel</DocTitle>
              <Controls>
                <UserName>Holli J</UserName>
                <Ctrl $w={13}><svg width="13" height="12" viewBox="0 0 13 12" fill="none" stroke="#fff"><path d="M.5.500h12v11H.5zM.5 3h12M6.500 10V5M4.500 7l2-2 2 2" /></svg></Ctrl>
                <Ctrl $w={10} $ml={35}><svg width="10" height="2"><path d="M0 1h10" stroke="#fff" /></svg></Ctrl>
                <Ctrl $w={11} $ml={36}><svg width="11" height="11" viewBox="0 0 11 11" fill="none" stroke="#fff"><path d="M.5 3.500h7v7h-7zM3 3V.5h7.500V8H8" /></svg></Ctrl>
                <Ctrl $w={11} $ml={35}><svg width="11" height="11" viewBox="0 0 11 11" stroke="#fff"><path d="M0 0l11 11M11 0L0 11" /></svg></Ctrl>
              </Controls>
            </TitleRow>
            <TabRow>
              {tabs.map(([t, w]) => <Tab key={t} $w={w} $active={t === "Home"}>{t}</Tab>)}
              <TellMe><Bulb />Tell me what you want to do</TellMe>
              <Share><Person />Share</Share>
            </TabRow>
          </Head>

          <Ribbon>
            <Group $w={157}>
              <Body>
                <Big $w={49} $muted>
                  <BigIcon><PasteIcon /></BigIcon>
                  <Line>Paste</Line>
                  <Line><Caret $c="#b0b0b0" /></Line>
                </Big>
                <SmallList>
                  <SmallItem><SmallIcon><Scissors /></SmallIcon>Cut</SmallItem>
                  <SmallItem><SmallIcon><CopyIcon /></SmallIcon>Copy<Slot $w={12} $ml={3}><Caret /></Slot></SmallItem>
                  <SmallItem><SmallIcon><Painter /></SmallIcon>Format Painter</SmallItem>
                </SmallList>
              </Body>
              <Label>Clipboard<LaunchIcon /></Label>
            </Group>
            <Group $w={207}>
              <Body $pl={5}>
                <Rows>
                  <RowLine>
                    <Combo $w={111}>Calibri<Caret /></Combo>
                    <Combo $w={43}>11<Caret /></Combo>
                    <Slot $w={19} $ml={7}><Glyph $size={15}>A</Glyph><svg width="6" height="4" viewBox="0 0 6 4"><path d="M0 4l3-4 3 4z" fill="#3f7fc4" /></svg></Slot>
                    <Slot $w={16} $ml={2}><Glyph $size={13}>A</Glyph><svg width="6" height="4" viewBox="0 0 6 4"><path d="M0 0l3 4 3-4z" fill="#3f7fc4" /></svg></Slot>
                  </RowLine>
                  <RowLine $h={22}>
                    <Slot $w={22}><Glyph $b>B</Glyph></Slot>
                    <Slot $w={22}><Glyph $i $serif $size={14}>I</Glyph></Slot>
                    <Slot $w={24}><Glyph $b $u>U</Glyph></Slot>
                    <Slot $w={8}><Caret /></Slot>
                    <Sep $w={14} />
                    <Slot $w={18}><BorderIcon /></Slot>
                    <Slot $w={16}><Caret /></Slot>
                    <Sep $w={4} />
                    <Slot $w={26}><ColorGlyph $bar="#ffff00"><Bucket /></ColorGlyph></Slot>
                    <Slot $w={8}><Caret /></Slot>
                    <Slot $w={28}><ColorGlyph $bar="#ff0000"><Glyph $size={14}>A</Glyph></ColorGlyph></Slot>
                    <Slot $w={4}><Caret /></Slot>
                  </RowLine>
                </Rows>
              </Body>
              <Label>Font<LaunchIcon /></Label>
            </Group>
            <Group $w={264}>
              <Body $pl={5}>
                <Rows>
                  <RowLine>
                    <Slot $w={22}><Align lines={[[0, 13, 2], [0, 13, 5], [0, 13, 8]]} /></Slot>
                    <Slot $w={22}><Align lines={[[0, 13, 4], [0, 13, 7], [0, 13, 10]]} /></Slot>
                    <Slot $w={22} $on><Align lines={[[0, 13, 7], [0, 13, 10], [0, 13, 13]]} /></Slot>
                    <Sep $w={10} />
                    <Slot $w={21}><Orient /></Slot>
                    <Slot $w={6}><Caret /></Slot>
                    <Sep $w={12} $ml={13} />
                    <TextBtn $w={82} $on><WrapIcon />Wrap Text</TextBtn>
                  </RowLine>
                  <RowLine $h={22}>
                    <Slot $w={22} $on><Align lines={[[0, 14, 2], [0, 10, 5], [0, 14, 8], [0, 10, 11]]} /></Slot>
                    <Slot $w={22}><Align lines={[[0, 14, 2], [2, 12, 5], [0, 14, 8], [2, 12, 11]]} /></Slot>
                    <Slot $w={22}><Align lines={[[0, 14, 2], [4, 14, 5], [0, 14, 8], [4, 14, 11]]} /></Slot>
                    <Sep $w={10} />
                    <Slot $w={21}><Indent /></Slot>
                    <Slot $w={22}><Indent right /></Slot>
                    <Sep $w={9} />
                    <TextBtn $w={125} $gap={6}><MergeIcon />Merge &amp; Center<Slot $w={12} $ml={2}><Caret /></Slot></TextBtn>
                  </RowLine>
                </Rows>
              </Body>
              <Label>Alignment<LaunchIcon /></Label>
            </Group>
            <Group $w={141}>
              <Body $pl={6}>
                <Rows>
                  <RowLine><Combo $w={130}>General<Caret /></Combo></RowLine>
                  <RowLine $h={22}>
                    <Slot $w={22}><Glyph $size={16}>$</Glyph></Slot>
                    <Slot $w={8}><Caret /></Slot>
                    <Slot $w={30}><Glyph $size={15}>%</Glyph></Slot>
                    <Slot $w={12}><Glyph $size={16} $b>,</Glyph></Slot>
                    <Sep $w={18} />
                    <Slot $w={16}><DecIcon /></Slot>
                    <Slot $w={16} $ml={5}><DecIcon flip /></Slot>
                  </RowLine>
                </Rows>
              </Body>
              <Label>Number<LaunchIcon /></Label>
            </Group>
            <Group $w={689}>
              <Body $pl={4}>
                <Big $w={72}>
                  <BigIcon><CfIcon /></BigIcon>
                  <Line>Conditional</Line>
                  <Line>Formatting<Caret /></Line>
                </Big>
                <Big $w={56}>
                  <BigIcon><TableIcon /></BigIcon>
                  <Line>Format as</Line>
                  <Line>Table<Caret /></Line>
                </Big>
                <Gallery>
                  <StyleGrid>
                    {galleryCells.map(([k, t]) => <StyleCell key={k} $kind={k}>{t}</StyleCell>)}
                  </StyleGrid>
                  <GalleryScroll>
                    <GalleryBtn $top><svg width="7" height="4" viewBox="0 0 7 4"><path d="M0 4l3.500-4L7 4z" fill="#bbb" /></svg></GalleryBtn>
                    <GalleryBtn><Caret /></GalleryBtn>
                    <GalleryBtn><svg width="7" height="6" viewBox="0 0 7 6"><path d="M0 .5h7" stroke="#666" /><path d="M0 2l3.500 4L7 2z" fill="#666" /></svg></GalleryBtn>
                  </GalleryScroll>
                </Gallery>
              </Body>
              <Label>Styles</Label>
            </Group>
            <Group $w={135}>
              <Body $pl={3}>
                <Big $w={42}><BigIcon><InsertIcon /></BigIcon><Line>Insert</Line><Line><Caret /></Line></Big>
                <Big $w={44}><BigIcon><DeleteIcon /></BigIcon><Line>Delete</Line><Line><Caret /></Line></Big>
                <Big $w={40}><BigIcon><FormatIcon /></BigIcon><Line>Format</Line><Line><Caret /></Line></Big>
              </Body>
              <Label>Cells</Label>
            </Group>
            <Group $w={187}>
              <Body $pl={8}>
                <SmallList>
                  <SmallItem><SmallIcon><Sigma /></SmallIcon>AutoSum<Slot $w={12} $ml={4}><Caret /></Slot></SmallItem>
                  <SmallItem><SmallIcon><FillIcon /></SmallIcon>Fill<Caret /></SmallItem>
                  <SmallItem><SmallIcon><Eraser /></SmallIcon>Clear<Caret /></SmallItem>
                </SmallList>
                <Big $w={42}>
                  <BigIcon><SortIcon /></BigIcon>
                  <Line>Sort &amp;</Line>
                  <Line>Filter<Caret /></Line>
                </Big>
                <Big $w={44}>
                  <BigIcon><FindIcon /></BigIcon>
                  <Line>Find &amp;</Line>
                  <Line>Select<Caret /></Line>
                </Big>
              </Body>
              <Label>Editing</Label>
            </Group>
            <Collapse width="10" height="6" viewBox="0 0 10 6" fill="none" stroke="#666" strokeWidth="1.500"><path d="M1 5l4-4 4 4" /></Collapse>
          </Ribbon>

          <Formula>
            <Box $w={102}>
              <NameInner>B11</NameInner>
              <Slot $w={16}><Caret /></Slot>
            </Box>
            <Grip>⋮</Grip>
            <Box $w={110}>
              <FnSlot $w={36}>✕</FnSlot>
              <FnSlot $w={36}>✓</FnSlot>
              <FnSlot $w={36}><Glyph $i $serif $size={14}>fx</Glyph></FnSlot>
            </Box>
            <FormulaGap />
            <Box>
              <FormulaText>9</FormulaText>
              <Slot $w={16}><svg width="8" height="6" viewBox="0 0 8 6" fill="none" stroke="#666" strokeWidth="1.500"><path d="M1 1l3 3 3-3" /></svg></Slot>
            </Box>
          </Formula>

          <Sheet>
            <GridArea>
              <HeaderRow>
                <Corner><svg width="13" height="13" viewBox="0 0 13 13"><path d="M13 0v13H0z" fill="#b5b5b5" /></svg></Corner>
                {cols.map(([c, w], i) => <ColH key={i} $w={w} $sel={c === "B"}>{c}</ColH>)}
              </HeaderRow>
              <Row $h={21}>
                <RowH>1</RowH>
                {headers.map((h, i) => <Cell key={h} $w={cols[i][1]} $table $head $edge={i === 6}>{h}</Cell>)}
                {blank.map(([, w], i) => <Cell key={i} $w={w} />)}
              </Row>
              {rows.map((r, idx) => {
                const n = idx + 2;
                return (
                  <Row key={n} $h={20}>
                    <RowH $sel={n === 11}>{n}</RowH>
                    {r.split("|").map((v, i) => (
                      <Cell key={i} $w={cols[i][1]} $table $edge={i === 6} $sel={n === 11 && i === 1}>{v}</Cell>
                    ))}
                    {blank.map(([, w], i) => <Cell key={i} $w={w} />)}
                  </Row>
                );
              })}
            </GridArea>
            <VScroll>
              <ScrollBtn><svg width="7" height="4" viewBox="0 0 7 4"><path d="M0 4l3.500-4L7 4z" fill="#666" /></svg></ScrollBtn>
              <VThumb />
              <Flex1 />
              <ScrollBtn $h={14}><Caret /></ScrollBtn>
            </VScroll>
          </Sheet>

          <SheetTabs>
            <Nav><NavArrow $left /><NavArrow /></Nav>
            {sheets.map(([t, w], i) => <STab key={t} $w={w} $active={i === 0}>{t}</STab>)}
            <AddSheet><svg width="16" height="16" viewBox="0 0 16 16" fill="none" stroke="#777"><circle cx="8" cy="8" r="7" /><path d="M8 4v8M4 8h8" strokeWidth="1.500" /></svg></AddSheet>
            <HScroll>
              <GripV />
              <ScrollBtn $h={14}><ScrollArrow $left /></ScrollBtn>
              <HTrack><HThumb /></HTrack>
              <ScrollBtn $w={14} $h={14}><ScrollArrow /></ScrollBtn>
            </HScroll>
          </SheetTabs>

          <Status>
            <Ready>Ready</Ready>
            <MacroSlot><MacroIcon /></MacroSlot>
            <StatusRight>
              <ViewBtn $on><svg width="13" height="13" viewBox="0 0 13 13" fill="none" stroke="#666"><path d="M.5.500h12v12H.5zM.5 4.500h12M.5 8.500h12M4.500.500v12M8.500.500v12" /></svg></ViewBtn>
              <ViewBtn><svg width="13" height="14" viewBox="0 0 13 14" fill="none" stroke="#666"><path d="M.5.500h12v13H.5zM3.500 3.500h6v7h-6zM5 5.500h3M5 7.500h3" /></svg></ViewBtn>
              <ViewBtn><svg width="13" height="14" viewBox="0 0 13 14" fill="none" stroke="#666"><path d="M.5.500h12v13H.5zM.5 9.500h6.500V.5" /></svg></ViewBtn>
              <Zoom>
                <ZoomMark $w={16}>-</ZoomMark>
                <Slider />
                <ZoomMark $w={16}>+</ZoomMark>
                <ZoomPct>100%</ZoomPct>
              </Zoom>
            </StatusRight>
          </Status>
        </Win>
        <Strip />
      </Middle>
      <Taskbar>
        <Orb />
        {tasks.map(([w, c], i) => <TaskBtn key={i} $w={w} $c={c} />)}
        <DesktopBtn />
      </Taskbar>
    </Page>
  );
}
